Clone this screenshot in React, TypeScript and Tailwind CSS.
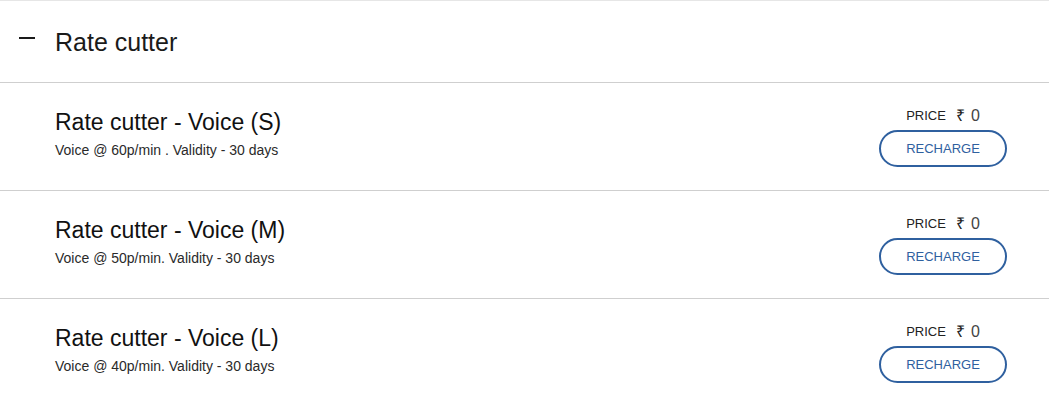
import React from "react";

const items = [
  { title: "Rate cutter - Voice (S)", sub: "Voice @ 60p/min . Validity - 30 days" },
  { title: "Rate cutter - Voice (M)", sub: "Voice @ 50p/min. Validity - 30 days" },
  { title: "Rate cutter - Voice (L)", sub: "Voice @ 40p/min. Validity - 30 days" },
];

export default function App() {
  return (
    <div
      className="w-[1049px] h-[403px] overflow-hidden bg-white"
      style={{ fontFamily: '"Liberation Sans", Arial, sans-serif' }}
    >
      <div className="border-t border-[#e6e6e6]">
        <div className="h-[82px] flex items-center border-b border-[#cfcfcf]">
          <div className="w-[16px] h-[2px] bg-[#1a1a1a] ml-[19px] mr-[20px] -mt-[8px]" />
          <div className="text-[25px] leading-[30px] text-[#1a1a1a]">Rate cutter</div>
        </div>
        {items.map((it) => (
          <div
            key={it.title}
            className="h-[108px] border-b border-[#cfcfcf] flex justify-between pl-[55px] pr-[42px]"
          >
            <div className="pt-[25px]">
              <div className="text-[23px] leading-[28px] text-[#111]">{it.title}</div>
              <div className="text-[14px] leading-[18px] text-[#2a2a2a] mt-[5px]">{it.sub}</div>
            </div>
            <div className="pt-[23px] flex flex-col items-center">
              <div className="h-[20px] flex items-center text-[#222]">
                <span className="text-[13px]">PRICE</span>
                <span className="text-[16px] ml-[10px]">₹</span>
                <span className="text-[16px] ml-[6px] text-[#444]">0</span>
              </div>
              <button className="mt-[4px] w-[128px] h-[37px] rounded-full border-2 border-[#2f609f] text-[#2f609f] text-[13px] bg-white">
                RECHARGE
              </button>
            </div>
          </div>
        ))}
      </div>
    </div>
  );
}
